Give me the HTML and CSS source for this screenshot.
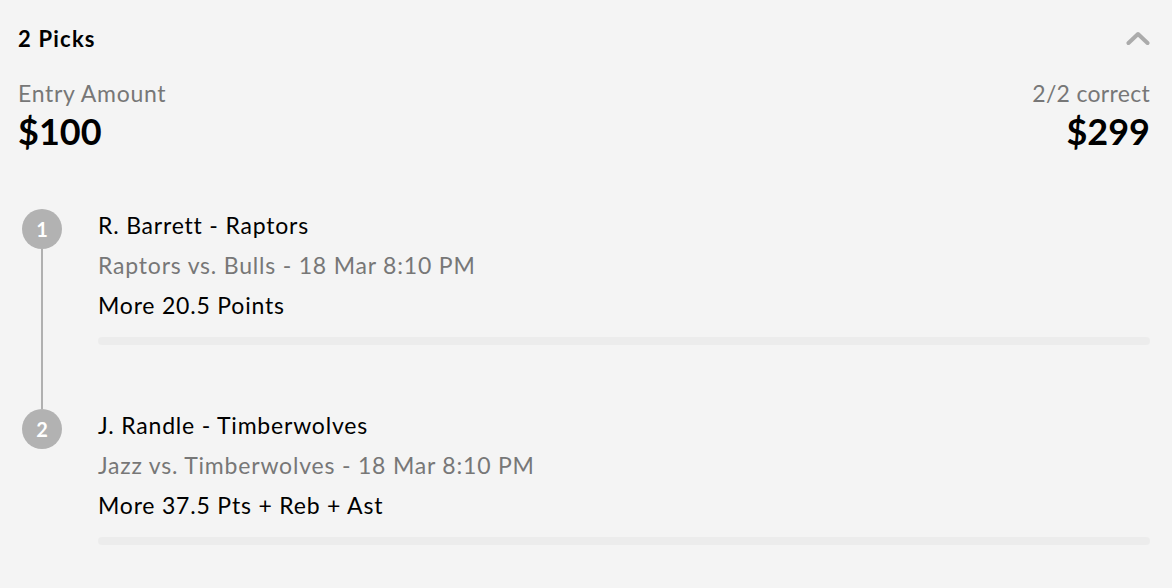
FILE: index.html
```html
<!DOCTYPE html>
<html lang="en">
<head>
<meta charset="utf-8">
<title>2 Picks</title>
<link rel="stylesheet" href="styles.css">
</head>
<body>
<div class="card">
  <div class="header">
    <span class="title">2 Picks</span>
    <svg class="chevron" width="24" height="14" viewBox="0 0 24 14" aria-hidden="true">
      <path d="M2.5 12 L12 3 L21.5 12" fill="none" stroke="#ababab" stroke-width="4" stroke-linecap="round" stroke-linejoin="round"/>
    </svg>
  </div>
  <div class="summary">
    <div class="col">
      <div class="label">Entry Amount</div>
      <div class="amount">$100</div>
    </div>
    <div class="col right">
      <div class="label">2/2 correct</div>
      <div class="amount">$299</div>
    </div>
  </div>
  <div class="picks">
    <div class="pick has-next">
      <div class="marker"><span class="num">1</span></div>
      <div class="info">
        <div class="player">R. Barrett - Raptors</div>
        <div class="game">Raptors vs. Bulls - 18 Mar 8:10 PM</div>
        <div class="line">More 20.5 Points</div>
        <div class="bar"></div>
      </div>
    </div>
    <div class="pick">
      <div class="marker"><span class="num">2</span></div>
      <div class="info">
        <div class="player">J. Randle - Timberwolves</div>
        <div class="game">Jazz vs. Timberwolves - 18 Mar 8:10 PM</div>
        <div class="line">More 37.5 Pts + Reb + Ast</div>
        <div class="bar"></div>
      </div>
    </div>
  </div>
</div>
</body>
</html>
```
FILE: styles.css
```css
html, body {
  margin: 0;
  padding: 0;
  background: #f4f4f4;
}
body {
  font-family: Lato, "Noto Sans", "Liberation Sans", sans-serif;
  color: #000;
}
.card {
  padding: 18px 22px 0 18px;
}
.header {
  display: flex;
  justify-content: space-between;
  align-items: center;
  height: 40px;
}
.title {
  font-size: 22px;
  font-weight: 700;
  letter-spacing: 1.2px;
}
.chevron {
  display: block;
}
.summary {
  display: flex;
  justify-content: space-between;
  margin-top: 19px;
}
.col.right {
  text-align: right;
}
.label {
  font-size: 23px;
  line-height: 32px;
  letter-spacing: 0.7px;
  color: #777;
}
.col.right .label {
  letter-spacing: 0.3px;
}
.amount {
  font-size: 36px;
  font-weight: 700;
  line-height: 44px;
}
.picks {
  margin-top: 52px;
}
.pick {
  position: relative;
  display: grid;
  grid-template-columns: 80px 1fr;
  padding-bottom: 60px;
}
.pick.has-next::after {
  content: "";
  position: absolute;
  left: 23px;
  top: 44px;
  width: 2px;
  height: 160px;
  background: #b0b0b0;
}
.marker {
  padding-top: 4px;
  padding-left: 4px;
}
.num {
  display: flex;
  align-items: center;
  justify-content: center;
  width: 40px;
  height: 40px;
  border-radius: 50%;
  background: #b2b2b2;
  color: #fff;
  font-weight: 700;
  font-size: 20px;
}
.player, .game, .line {
  font-size: 23px;
  line-height: 40px;
  letter-spacing: 0.8px;
}
.game {
  color: #777;
}
.bar {
  margin-top: 12px;
  height: 8px;
  border-radius: 4px;
  background: #ececec;
}
```
